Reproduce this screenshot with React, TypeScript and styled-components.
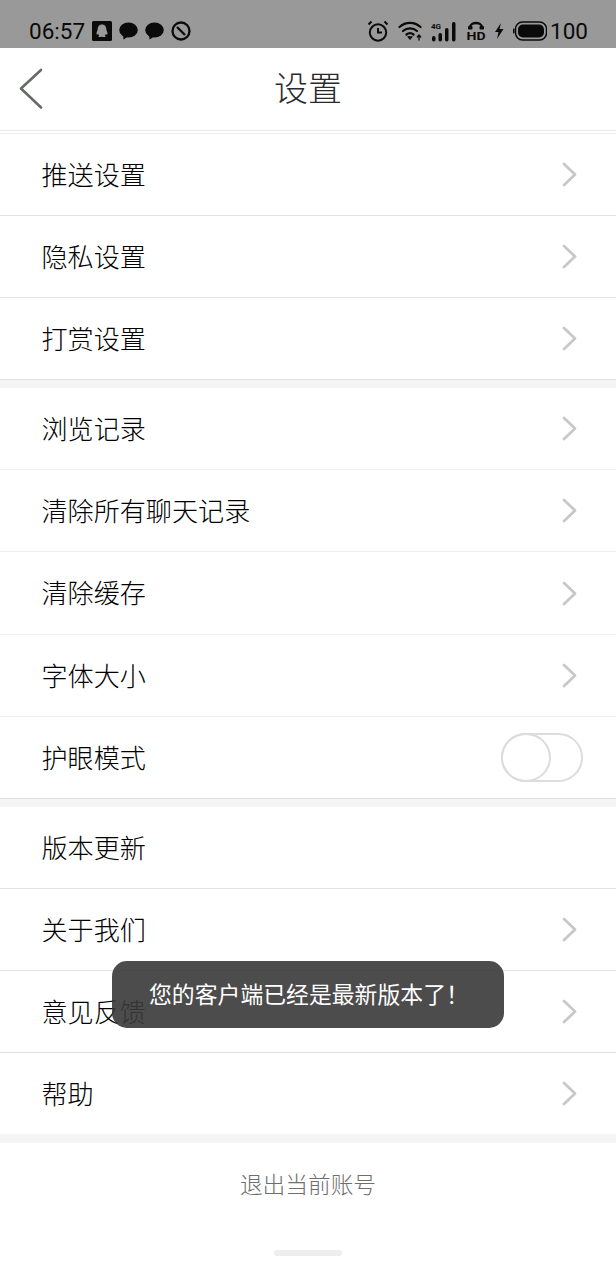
import React from "react";
import styled, { createGlobalStyle } from "styled-components";

const Global = createGlobalStyle`
  html, body { margin: 0; padding: 0; background: #fff; }
  body { font-family: "Roboto", "Noto Sans CJK SC", sans-serif; }
  * { box-sizing: border-box; }
`;

const Screen = styled.div`
  position: relative;
  width: 616px;
  height: 1280px;
  overflow: hidden;
  background: #fff;
  display: flex;
  flex-direction: column;
`;

const StatusBar = styled.div`
  height: 48px;
  background: #999999;
  color: #0a0a0a;
  display: flex;
  align-items: flex-end;
  justify-content: space-between;
  padding: 0 28px 3px 29px;
`;

const StatusGroup = styled.div<{ $gap: number }>`
  display: flex;
  align-items: center;
  gap: ${(p) => p.$gap}px;
  height: 28px;
`;

const StatusText = styled.span<{ $pull?: number }>`
  font-family: "Roboto", sans-serif;
  font-size: 22.5px;
  line-height: 28px;
  margin-left: ${(p) => p.$pull ?? 0}px;
  white-space: nowrap;
`;

const Header = styled.header`
  height: 83px;
  padding-bottom: 6px;
  display: flex;
  align-items: center;
  justify-content: center;
  position: relative;
  border-bottom: 1px solid #e8e8e8;
`;

const BackButton = styled.div`
  position: absolute;
  left: 19px;
  top: 20px;
  width: 24px;
  height: 42px;
`;

const Title = styled.h1`
  margin: 0;
  font-family: "Noto Sans CJK SC", sans-serif;
  font-weight: 300;
  font-size: 34px;
  color: #2a2a2a;
`;

const TopRule = styled.div`
  height: 3px;
  border-bottom: 1px solid #f0f0f0;
`;

const Gap = styled.div<{ $h?: number }>`
  height: ${(p) => p.$h ?? 8}px;
  background: #f4f4f4;
`;

const Row = styled.div<{ $tall?: boolean; $soft?: boolean; $last?: boolean }>`
  height: ${(p) => (p.$last ? 81 : p.$tall ? 83 : 82)}px;
  display: flex;
  align-items: center;
  justify-content: space-between;
  padding: 0 39px 0 41.5px;
  border-bottom: ${(p) =>
    p.$last ? "none" : `1px solid ${p.$soft ? "#f0f0f0" : "#e2e2e2"}`};
`;

const Label = styled.span`
  font-family: "Noto Sans CJK SC", sans-serif;
  font-weight: 300;
  font-size: 26.1px;
  margin-top: -2px;
  color: #000;
`;

const Toggle = styled.div`
  position: relative;
  width: 82px;
  height: 49px;
  margin-right: -6px;
  border: 2.5px solid #dcdcdc;
  border-radius: 25px;
`;

const Knob = styled.div`
  position: absolute;
  left: -2.5px;
  top: -2.5px;
  width: 50px;
  height: 49px;
  border: 2.5px solid #dcdcdc;
  border-radius: 50%;
  background: #fff;
`;

const Logout = styled.div`
  height: 84px;
  padding-bottom: 4px;
  display: flex;
  align-items: center;
  justify-content: center;
  font-family: "Noto Sans CJK SC", sans-serif;
  font-weight: 300;
  font-size: 22.7px;
  color: #6e6e6e;
`;

const HomeBar = styled.div`
  position: absolute;
  left: 274px;
  top: 1250px;
  width: 68px;
  height: 6px;
  border-radius: 3px;
  background: #eeeeee;
`;

const Toast = styled.div`
  position: absolute;
  left: 112px;
  top: 961px;
  width: 392px;
  height: 67px;
  padding: 0 0 4px 37px;
  display: flex;
  align-items: center;
  border-radius: 15px;
  background: rgba(56, 56, 56, 0.9);
  color: #fff;
  font-family: "Noto Sans CJK SC", sans-serif;
  font-size: 22.85px;
`;

const Chevron = () => (
  <svg width="15" height="25" viewBox="0 0 15 25" fill="none" style={{ display: "block" }}>
    <path d="M2 2 L13 12.500 L2 23" stroke="#c8c8c8" strokeWidth="2.800" strokeLinecap="round" strokeLinejoin="round" />
  </svg>
);

const Back = () => (
  <svg width="24" height="42" viewBox="0 0 24 42" fill="none">
    <path d="M22 2 L2 20.500 L22 39.500" stroke="#666b66" strokeWidth="2.600" strokeLinecap="round" strokeLinejoin="round" />
  </svg>
);

const QQ = () => (
  <svg width="20" height="20" viewBox="0 0 20 20">
    <rect width="20" height="20" rx="1.500" fill="#0a0a0a" />
    <path d="M10 3.500c-3 0-4.300 2.300-4.300 4.800 0 1-1.400 3-1.200 4.800.2 1 1 .4 1.500-.4.3 1 .8 1.600 1.300 2-1 .3-1.200 1.300.2 1.300 1 0 1.800-.3 2.500-.3s1.500.3 2.500.3c1.400 0 1.200-1 .2-1.300.5-.4 1-1 1.300-2 .5.8 1.300 1.400 1.500.4.2-1.800-1.200-3.800-1.200-4.800 0-2.500-1.300-4.800-4.300-4.800z" fill="#999" />
  </svg>
);

const Bubble = () => (
  <svg width="19" height="18" viewBox="0 0 19 18">
    <ellipse cx="9.500" cy="8" rx="9.300" ry="7.500" fill="#0a0a0a" />
    <path d="M4 12 L4.500 17.500 L10 14z" fill="#0a0a0a" />
  </svg>
);

const Blocked = () => (
  <svg width="20" height="20" viewBox="0 0 20 20" fill="none" stroke="#0a0a0a" strokeWidth="2.300">
    <circle cx="10" cy="10" r="8.500" />
    <path d="M6 6 L14 14" />
  </svg>
);

const Alarm = () => (
  <svg width="22" height="22" viewBox="0 0 22 22" fill="none" stroke="#0a0a0a" strokeWidth="2">
    <circle cx="11" cy="12.500" r="8.200" />
    <path d="M11 8 V12.500 H15" />
    <path d="M1.500 4.500 L4.500 1.500 M17.500 1.500 L20.500 4.500" />
  </svg>
);

const Wifi = () => (
  <svg width="25" height="20" viewBox="0 0 25 20" fill="none" stroke="#0a0a0a" strokeWidth="2.200" strokeLinecap="round">
    <path d="M1.500 6 C7.500 .5 16.500 .5 22.500 6" />
    <path d="M5 10 C9 6.500 15 6.500 19 10" />
    <path d="M8.500 13.500 C10.500 12 13.500 12 15.500 13.500" />
    <path d="M10 16 L12 18.500 L14 16z" fill="#0a0a0a" strokeWidth="1" />
    <path d="M21 19 V14.500 M19.300 16 L21 14 L22.700 16" strokeWidth="1.300" />
  </svg>
);

const Signal = () => (
  <svg width="26" height="21" viewBox="0 0 26 21" fill="#0a0a0a">
    <rect x="1" y="15" width="3.500" height="5.500" rx="1.700" />
    <rect x="7.500" y="12" width="3.500" height="8.500" rx="1.700" />
    <rect x="14" y="7" width="3.500" height="13.500" rx="1.700" />
    <rect x="21" y="1" width="3.500" height="19.500" rx="1.700" />
    <text x="0" y="8" fontSize="8" fontFamily="Roboto, sans-serif" fontWeight="700">4G</text>
  </svg>
);

const HdCall = () => (
  <svg width="20" height="24" viewBox="0 0 20 24">
    <path d="M4 8.500 C4 2.500 16 2.500 16 8.500" fill="none" stroke="#0a0a0a" strokeWidth="2.400" />
    <rect x="2" y="7" width="4.500" height="3.500" rx="1" fill="#0a0a0a" />
    <rect x="13.500" y="7" width="4.500" height="3.500" rx="1" fill="#0a0a0a" />
    <text x="0.500" y="21" fontSize="11.500" textLength="19" lengthAdjust="spacingAndGlyphs" fontFamily="Roboto, sans-serif" fontWeight="700" fill="#0a0a0a">HD</text>
  </svg>
);

const Bolt = () => (
  <svg width="10" height="16" viewBox="0 0 10 16" fill="#0a0a0a">
    <path d="M7 0 L1 9 H4.500 L3 16 L9.500 6 H5.500z" />
  </svg>
);

const Battery = () => (
  <svg width="34" height="20" viewBox="0 0 34 20">
    <rect x="2.500" y="1" width="31" height="18" rx="7" fill="none" stroke="#0a0a0a" strokeWidth="1.500" />
    <rect x="5" y="3.500" width="26" height="13" rx="5" fill="#0a0a0a" />
    <rect x="0" y="7.500" width="1.500" height="5" rx=".7" fill="#0a0a0a" />
  </svg>
);

type Item = { label: string; toggle?: boolean; noArrow?: boolean; tall?: boolean; soft?: boolean; last?: boolean };

const groups: Item[][] = [
  [{ label: "推送设置" }, { label: "隐私设置" }, { label: "打赏设置" }],
  [
    { label: "浏览记录", soft: true },
    { label: "清除所有聊天记录", soft: true },
    { label: "清除缓存", soft: true, tall: true },
    { label: "字体大小", soft: true },
    { label: "护眼模式", toggle: true },
  ],
  [
    { label: "版本更新", noArrow: true },
    { label: "关于我们" },
    { label: "意见反馈" },
    { label: "帮助", last: true },
  ],
];

export default function App() {
  return (
    <Screen>
      <Global />
      <StatusBar>
        <StatusGroup $gap={7}>
          <StatusText>06:57</StatusText>
          <QQ />
          <Bubble />
          <Bubble />
          <Blocked />
        </StatusGroup>
        <StatusGroup $gap={8.500}>
          <Alarm />
          <Wifi />
          <Signal />
          <HdCall />
          <Bolt />
          <Battery />
          <StatusText $pull={-5}>100</StatusText>
        </StatusGroup>
      </StatusBar>
      <Header>
        <BackButton>
          <Back />
        </BackButton>
        <Title>设置</Title>
      </Header>
      {groups.map((items, i) => (
        <React.Fragment key={i}>
          {i === 0 ? <TopRule /> : <Gap />}
          {items.map((it) => (
            <Row key={it.label} $tall={it.tall} $soft={it.soft} $last={it.last}>
              <Label>{it.label}</Label>
              {it.toggle ? (
                <Toggle>
                  <Knob />
                </Toggle>
              ) : it.noArrow ? null : (
                <Chevron />
              )}
            </Row>
          ))}
        </React.Fragment>
      ))}
      <Gap $h={9} />
      <Logout>退出当前账号</Logout>
      <HomeBar />
      <Toast>您的客户端已经是最新版本了！</Toast>
    </Screen>
  );
}
